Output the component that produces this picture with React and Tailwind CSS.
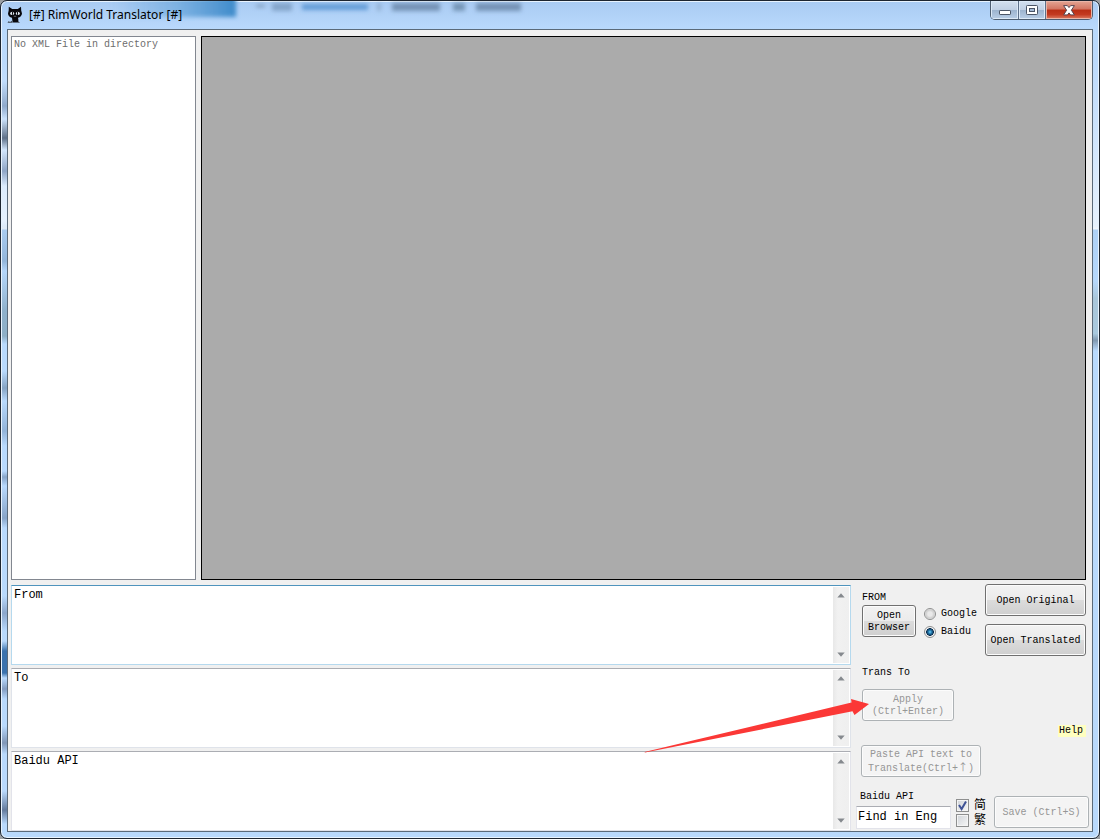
const mono = "font-['Liberation_Mono','Noto_Sans_CJK_SC',monospace]";

const buttonBase =
  "rounded-[3px] border pt-px text-center text-[10px] leading-3 font-['Liberation_Mono','Noto_Sans_CJK_SC',monospace]";
const enabled =
  "border-[#707070] text-black shadow-[inset_0_0_0_1px_#fcfcfc] bg-[linear-gradient(#f2f2f2_0%,#ebebeb_50%,#dcdcdc_50%,#cfcfcf_100%)]";
const disabled = "border-[#adb2b5] bg-[#f4f4f4] text-[#969696] shadow-[inset_0_0_0_1px_#fcfcfc]";

function CatIcon() {
  return (
    <svg width="16" height="18" viewBox="0 0 16 18" aria-hidden="true">
      <path d="M1.8 0.8 L5.2 3 H10.8 L14 0.8 L14.2 4.5 L15 7.5 Q14.6 11 11 11.8 L11.4 14 L11 16.6 H5.6 L5 11.8 Q1.2 11 1 7.5 L1.7 4.5 Z" fill="#08080c" />
      <path d="M0.5 16.8 L1.5 15.2 L3.2 16 L4.6 14.8 L5.6 16.8 Z" fill="#3a4048" />
      <path d="M11 15 L13 16.8 H11 Z" fill="#3a4048" />
      <ellipse cx="5.2" cy="7.4" rx="2" ry="1.7" fill="#dfe7f0" />
      <ellipse cx="10.8" cy="7.4" rx="2" ry="1.7" fill="#dfe7f0" />
      <path d="M5.5 6v2.8M10.5 6v2.8" stroke="#111" strokeWidth="1" />
      <path d="M6.8 10.3 H9.2" stroke="#8b939c" strokeWidth="0.7" />
    </svg>
  );
}

function GlassReflection() {
  return (
    <svg
      className="pointer-events-none absolute top-0 left-0"
      width="540"
      height="28"
      viewBox="0 0 540 28"
      aria-hidden="true"
    >
      <defs>
        <filter id="soft" x="-20%" y="-50%" width="140%" height="200%">
          <feGaussianBlur stdDeviation="2.2" />
        </filter>
        <linearGradient id="tab" x1="0" x2="1">
          <stop offset="0" stopColor="#4c94d0" stopOpacity="0" />
          <stop offset="0.5" stopColor="#4c94d0" stopOpacity="0.45" />
          <stop offset="1" stopColor="#3f8bca" />
        </linearGradient>
      </defs>
      <g filter="url(#soft)">
        <rect x="110" y="-4" width="125" height="20" fill="url(#tab)" />
        <rect x="255" y="4" width="9" height="2" fill="#6f8aa8" />
        <rect x="271" y="2" width="20" height="8" fill="#6383a8" opacity="0.55" />
        <rect x="301" y="3" width="66" height="6" fill="#3c80c6" opacity="0.65" />
        <rect x="376" y="2" width="4" height="8" fill="#7f9bbb" opacity="0.6" />
        <rect x="391" y="2" width="48" height="8" fill="#54708f" opacity="0.62" />
        <rect x="452" y="2" width="12" height="8" fill="#54708f" opacity="0.6" />
        <rect x="475" y="2" width="45" height="8" fill="#54708f" opacity="0.62" />
      </g>
    </svg>
  );
}

function WindowControls() {
  const plain =
    "flex h-[18px] items-center justify-center border-r border-[#5d7089] shadow-[inset_0_0_0_1px_#dce9f7] bg-[linear-gradient(#d3e0ef_0%,#c0d0e4_48%,#9cb3ce_50%,#b9cee6_100%)]";
  return (
    <div className="flex overflow-hidden rounded-b-[5px] border border-t-0 border-[#4d5d70]">
      <button aria-label="Minimize" className={plain + " w-7 pt-1"}>
        <svg width="14" height="8" viewBox="0 0 14 8">
          <rect x="1.5" y="2.5" width="11" height="4" rx="0.6" fill="#fff" stroke="#4b5566" />
        </svg>
      </button>
      <button aria-label="Maximize" className={plain + " w-[27px]"}>
        <svg width="12" height="10" viewBox="0 0 12 10">
          <rect x="0.5" y="0.5" width="11" height="9" rx="0.8" fill="#fff" stroke="#4b5566" />
          <rect x="3.5" y="3.5" width="5" height="3" fill="#a6bbd6" stroke="#4b5566" />
        </svg>
      </button>
      <button
        aria-label="Close"
        className="flex h-[18px] w-[46px] items-center justify-center bg-[linear-gradient(#e4a594_0%,#d27461_45%,#b92e14_50%,#c33a20_75%,#dd7d63_100%)] shadow-[inset_0_0_0_1px_#e9b5a8]"
      >
        <svg width="12" height="11" viewBox="0 0 12 11">
          <path
            d="M0.6 0.6 H4.4 L6 2.6 L7.6 0.6 H11.4 L8.4 5.2 L11.4 9.9 H7.6 L6 7.9 L4.4 9.9 H0.6 L3.6 5.2 Z"
            fill="#fff"
            stroke="#58454f"
            strokeLinejoin="round"
          />
        </svg>
      </button>
    </div>
  );
}

function ScrollArrow({ down }) {
  return (
    <svg width="8" height="5" viewBox="0 0 8 5" className={down ? "rotate-180" : ""} aria-hidden="true">
      <path d="M4 0.3 L7.7 4.6 H0.3 Z" fill="#85898e" />
    </svg>
  );
}

function TextPane({ label, frame }) {
  return (
    <div className={"flex h-20 border bg-white " + frame}>
      <textarea
        aria-label={label}
        defaultValue={label}
        className={"min-w-0 flex-1 resize-none overflow-hidden bg-white px-0.5 pt-px text-[12px] leading-4 text-black outline-none " + mono}
      />
      <div className="my-px mr-px flex w-4 flex-col justify-between bg-[linear-gradient(90deg,#e8e8e8,#f1f1f1_30%,#efefef)]">
        <button aria-label={label + " scroll up"} className="flex h-[17px] items-center justify-center">
          <ScrollArrow />
        </button>
        <button aria-label={label + " scroll down"} className="flex h-[17px] items-center justify-center">
          <ScrollArrow down />
        </button>
      </div>
    </div>
  );
}

const radioClass =
  "size-3 shrink-0 appearance-none rounded-full border border-[#8e8f8f] bg-[radial-gradient(circle,#e9e9e9_30%,#cdcdcd_60%,#fafafa_75%)] checked:bg-[radial-gradient(circle_at_50%_50%,#7fdcfb_0%,#2a86bd_20%,#0b2f50_50%,#f4f4f4_58%)]";

function Check({ id, label, checked }) {
  return (
    <div className="flex h-[15px] items-center gap-[5px]">
      <span className="relative flex size-[13px]">
        <input
          id={id}
          type="checkbox"
          defaultChecked={checked}
          className="peer size-[13px] appearance-none border border-[#8e8f8f] bg-[linear-gradient(135deg,#cfd3d8,#f6f6f6)] shadow-[inset_0_0_0_1px_#f4f4f4]"
        />
        <svg
          className="pointer-events-none absolute inset-0 hidden peer-checked:block"
          width="13"
          height="13"
          viewBox="0 0 13 13"
          aria-hidden="true"
        >
          <path d="M3 6 L5.6 10 L10 2.6" fill="none" stroke="#3f5295" strokeWidth="2" />
        </svg>
      </span>
      <label htmlFor={id} className="pt-0.5 text-[12px] leading-[15px]">
        {label}
      </label>
    </div>
  );
}

function Controls() {
  return (
    <div className={"flex w-[241px] shrink-0 flex-col pl-[5px] text-[10px] leading-3 text-black " + mono}>
      <div className="flex justify-between pr-[6px] pl-[6px]">
        <div className="pt-[7px]">
          <div>FROM</div>
          <div className="flex items-start gap-2">
            <button className={buttonBase + " " + enabled + " mt-px h-8 w-[54px]"}>
              Open
              <br />
              Browser
            </button>
            <div className="flex flex-col gap-[5px] pt-[3px]">
              <label className="flex items-center gap-[5px]">
                <input type="radio" name="source" className={radioClass} />
                <span className="pt-px">Google</span>
              </label>
              <label className="flex items-center gap-[5px]">
                <input type="radio" name="source" defaultChecked className={radioClass} />
                <span className="pt-px">Baidu</span>
              </label>
            </div>
          </div>
        </div>
        <div className="-mt-px flex flex-col gap-2">
          <button className={buttonBase + " " + enabled + " h-8 w-[101px]"}>Open Original</button>
          <button className={buttonBase + " " + enabled + " h-8 w-[101px] whitespace-nowrap"}>Open Translated</button>
        </div>
      </div>

      <div className="mt-[11px] pl-[6px]">
        <div>Trans To</div>
        <div className="relative mt-[10px] w-[92px]">
          <button disabled className={buttonBase + " " + disabled + " h-8 w-full"}>
            Apply
            <br />
            (Ctrl+Enter)
          </button>
          <svg
            className="pointer-events-none absolute top-2 -left-[218px] max-w-none"
            width="226"
            height="58"
            viewBox="0 0 226 58"
            aria-hidden="true"
          >
            <path d="M0.5 55 L207.5 5.5 L207 2 L225 7 L210.5 18 L208.5 14.3 L1 55.6 Z" fill="#fb3836" />
          </svg>
        </div>
      </div>

      <div className="mt-1 flex justify-end pr-[6px]">
        <a href="#help" className="bg-[#ffffc0] pr-[3px] pl-px text-black">
          Help
        </a>
      </div>

      <div className="mt-2 pl-[5px]">
        <button disabled className={buttonBase + " " + disabled + " h-8 w-[120px] whitespace-nowrap"}>
          Paste API text to
          <br />
          Translate(Ctrl+<span className="font-['Noto_Sans_CJK_SC',sans-serif]">↑</span>)
        </button>
      </div>

      <div className="mt-[14px] flex items-start">
        <div className="w-[95px]">
          <label htmlFor="find" className="block pl-1">
            Baidu API
          </label>
          <input
            id="find"
            defaultValue="Find in Eng"
            className={"mt-[3px] h-[23px] w-full border border-[#e2e3ea] border-t-[#abadb3] bg-white px-px pb-0.5 text-[12px] leading-4 outline-none " + mono}
          />
        </div>
        <div className="mt-[7px] ml-[5px] w-[38px]">
          <Check id="simplified" label="简" checked />
          <Check id="traditional" label="繁" />
        </div>
        <button disabled className={buttonBase + " " + disabled + " mt-[5px] h-8 w-[95px]"}>
          Save (Ctrl+S)
        </button>
      </div>
    </div>
  );
}

export default function App() {
  return (
    <div className="flex min-h-screen flex-col bg-[#9b9fa3]">
      <div className="relative flex flex-1 flex-col rounded-[7px] border border-[#1d2530] bg-[linear-gradient(#a9cbf2_0px,#b9d9fc_28px,#bcdafc_60px,#e6f1fd_225px,#f1f6fc_228px,#aed1f6_229px,#b9dafd_300px,#b9d9fc_100%)] px-[6px] pb-[6px] shadow-[inset_0_0_0_1px_#e8f3fe]">
        <div
          className="pointer-events-none absolute top-[80px] bottom-2 left-px w-[5px] bg-[linear-gradient(transparent_0px,#8fa9cb_25px,transparent_38px,#5e7088_57px,transparent_69px,#8fa5c5_90px,transparent_105px,transparent_140px,#93b6da_180px,transparent_190px,#8fb1cb_230px,#8eafc6_255px,transparent_263px,transparent_290px,#86a4c4_307px,transparent_320px,#93b4d9_350px,transparent_365px,transparent_390px,#88a5c8_396px,transparent_405px,#88a5c8_437px,transparent_447px,transparent_515px,#8ba6cb_532px,transparent_550px,transparent_560px,#3b72ad_570px,#3b72ad_592px,transparent_597px,#839cc0_608px,transparent_618px,transparent_645px,#8096b6_662px,transparent_673px,transparent_710px,#647b9d_729px,transparent_743px)]"
        />
        <div className="pointer-events-none absolute top-[280px] right-px h-[70px] w-[5px] bg-[linear-gradient(transparent,#a9c6da_25%,#a9c9de_75%,#8199b1_85%,transparent)]" />
        <GlassReflection />
        <header className="relative flex h-7 items-start justify-between">
          <div className="flex items-center gap-[6px] pt-1">
            <CatIcon />
            <h1 className="font-['Noto_Sans','Open_Sans',sans-serif] text-[12px] leading-5 text-black">
              [#] RimWorld Translator [#]
            </h1>
          </div>
          <WindowControls />
        </header>

        <main className="relative flex flex-1 flex-col border border-[#5b6a79] bg-[#f0f0f0] pt-[6px] pl-[3px]">
          <div className="flex min-h-[300px] flex-1 gap-[5px] pr-[6px]">
            <div
              role="listbox"
              aria-label="XML files"
              className={"w-[185px] shrink-0 border border-[#828790] bg-white px-0.5 pt-0.5 text-[10px] leading-3 text-[#6d6d6d] " + mono}
            >
              No XML File in directory
            </div>
            <div className="min-w-0 flex-1 border border-black bg-[#ababab]" />
          </div>
          <div className="mt-[5px] flex">
            <div className="flex min-w-0 flex-1 flex-col gap-[3px]">
              <TextPane label="From" frame="border-[#b5d9ee] border-t-[#4f94bd]" />
              <TextPane label="To" frame="border-[#dfe3ea] border-t-[#abadb3]" />
              <TextPane label="Baidu API" frame="border-[#e2e3ea] border-t-[#abadb3]" />
            </div>
            <Controls />
          </div>
        </main>
      </div>
    </div>
  );
}
